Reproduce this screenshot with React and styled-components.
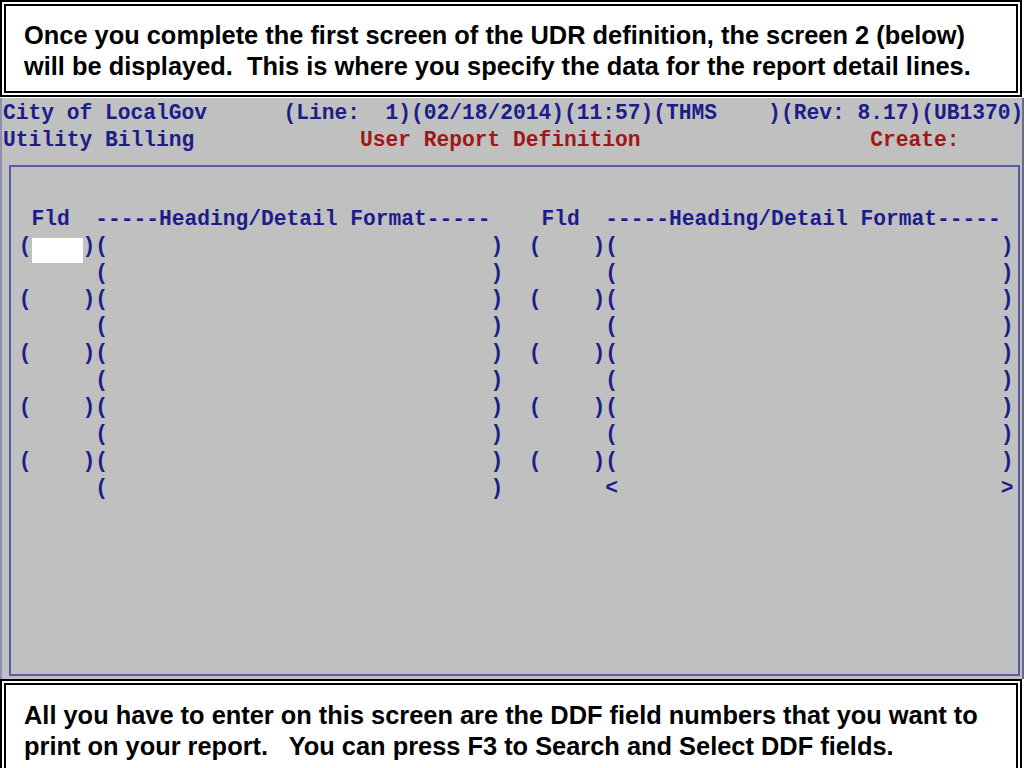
import React from "react";
import styled, { createGlobalStyle } from "styled-components";

const GlobalStyle = createGlobalStyle`
  html, body {
    margin: 0;
    padding: 0;
    background: #ffffff;
    overflow: hidden;
  }
`;

const Page = styled.div`
  width: 1024px;
  height: 768px;
  display: flex;
  flex-direction: column;
  overflow: hidden;
`;

const NoteBox = styled.div`
  box-sizing: border-box;
  width: 1022px;
  height: ${(p) => p.height}px;
  flex: none;
  border: 6px double #000;
  border-bottom-width: ${(p) => (p.open ? 0 : 6)}px;
  background: #fff;
  padding: ${(p) => p.padTop}px 0 0 18px;
  font-family: "Liberation Sans", Arial, sans-serif;
  font-weight: 700;
  font-size: 25.4px;
  line-height: 31px;
  color: #000;
  white-space: pre;
`;

const Terminal = styled.div`
  box-sizing: border-box;
  flex: none;
  height: 581px;
  margin-top: 1px;
  background: #c0c0c0;
  border-left: 2px solid #8e8eae;
  border-right: 2px solid #6a6a8e;
  padding: 2px 0 3px 1px;
  display: flex;
  flex-direction: column;
  font-family: "Liberation Mono", "Courier New", monospace;
  font-weight: 700;
  font-size: 21.25px;
  color: #1c1c8a;
`;

const Line = styled.div`
  height: 26.9px;
  line-height: 26.9px;
  white-space: pre;
`;

const Red = styled.span`
  color: #a31616;
`;

const Panel = styled.div`
  box-sizing: border-box;
  flex: 1;
  margin: 11px 2px 0 6px;
  border: 2px solid #5a5aa8;
  padding: 39px 0 0 0;
  & > div {
    margin-left: -5px;
  }
`;

const Input = styled.span`
  display: inline-block;
  background: #fff;
  height: 25px;
  vertical-align: -5px;
`;

// build an 80-col row from {col: text} pairs
const row = (marks) => {
  const cells = Array(80).fill(" ");
  Object.entries(marks).forEach(([c, s]) => {
    for (let i = 0; i < s.length; i++) cells[+c + i] = s[i];
  });
  return cells.join("").replace(/\s+$/, "");
};

const header = row({
  2: "Fld",
  7: "-----Heading/Detail Format-----",
  42: "Fld",
  47: "-----Heading/Detail Format-----",
});

const fieldRow = row({ 1: "(", 6: ")", 7: "(", 38: ")", 41: "(", 46: ")", 47: "(", 78: ")" });
const contRow = row({ 7: "(", 38: ")", 47: "(", 78: ")" });
const lastRow = row({ 7: "(", 38: ")", 47: "<", 78: ">" });

const rows = [];
for (let i = 0; i < 5; i++) {
  rows.push(fieldRow);
  rows.push(i === 4 ? lastRow : contRow);
}

export default function App() {
  return (
    <Page>
      <GlobalStyle />
      <NoteBox height={97} padTop={14}>
        {"Once you complete the first screen of the UDR definition, the screen 2 (below)\nwill be displayed.  This is where you specify the data for the report detail lines."}
      </NoteBox>
      <Terminal>
        <Line>{"City of LocalGov      (Line:  1)(02/18/2014)(11:57)(THMS    )(Rev: 8.17)(UB1370)"}</Line>
        <Line>
          {"Utility Billing             "}
          <Red>User Report Definition</Red>
          {"                  "}
          <Red>Create:</Red>
        </Line>
        <Panel>
          <Line>{header}</Line>
          {rows.map((r, i) =>
            i === 0 ? (
              <Line key={i}>
                {r.slice(0, 2)}
                <Input>{"    "}</Input>
                {r.slice(6)}
              </Line>
            ) : (
              <Line key={i}>{r}</Line>
            )
          )}
        </Panel>
      </Terminal>
      <NoteBox height={100} padTop={15} open>
        {"All you have to enter on this screen are the DDF field numbers that you want to\nprint on your report.   You can press F3 to Search and Select DDF fields."}
      </NoteBox>
    </Page>
  );
}
